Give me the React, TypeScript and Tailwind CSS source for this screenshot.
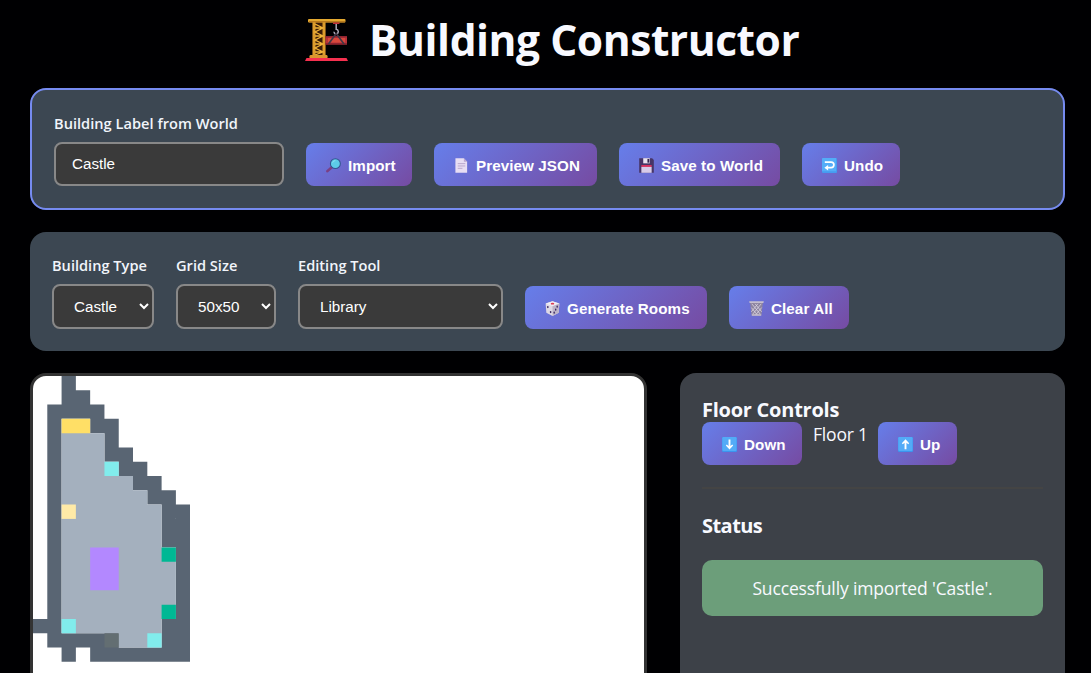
import type { ReactNode } from "react";

const MAP = [
  "..W........",
  "..WW.......",
  ".WWWW......",
  ".WYYWW.....",
  ".WFFFW.....",
  ".WFFFWW....",
  ".WFFFCWW...",
  ".WFFFFFWW..",
  ".WFFFFFFWW.",
  ".WLFFFFFFWW",
  ".WFFFFFFFWW",
  ".WFFFFFFFWW",
  ".WFFPPFFFGW",
  ".WFFPPFFFFW",
  ".WFFPPFFFFW",
  ".WFFFFFFFFW",
  ".WFFFFFFFGW",
  "WWCFFFFFFWW",
  ".WWWWDFFCWW",
  "..W.WWWWWWW",
];

// Base layers also cover the tiles drawn over them, so no gaps show between.
const LAYERS = [
  { kinds: "WD", color: "#596573" },
  { kinds: "FYLCGP", color: "#a4b0be" },
  { kinds: "Y", color: "#ffdf66" },
  { kinds: "L", color: "#ffeaa7" },
  { kinds: "C", color: "#81ecec" },
  { kinds: "G", color: "#00b894" },
  { kinds: "P", color: "#b388ff" },
  { kinds: "D", color: "#636e72" },
];

const CELL = 14.29;

function tilePath(kinds: string) {
  const parts: string[] = [];
  MAP.forEach((row, y) =>
    [...row].forEach((c, x) => {
      if (kinds.includes(c)) parts.push(`M${x} ${y}h1v1h-1z`);
    })
  );
  return parts.join("");
}

function Crane() {
  return (
    <svg className="h-[44px] w-[44px] shrink-0" viewBox="0 0 44 44">
      <path d="M7.500 3H20.500V39H7.500z" fill="#3a1c08" />
      <path d="M7.500 3h3v36h-3zM17.500 3h3v36h-3z" fill="#dc9c2c" />
      <path d="M10 6l8 4-8 4 8 4-8 4 8 4-8 4 8 4-8 3M10 10h8M10 18h8M10 26h8M10 34h8" stroke="#f0b43a" strokeWidth="1.300" fill="none" />
      <rect x="3" y="1" width="37.500" height="3.400" rx="1" fill="#e3a830" />
      <rect x="4" y="3" width="36" height="1.400" fill="#b87a1e" />
      <rect x="4.500" y="37" width="18" height="3.500" rx="1.200" fill="#d9962f" />
      <path d="M1.500 40h40l1.500 3H0z" fill="#f5304f" />
      <rect x="28" y="4.400" width="6.500" height="1.600" rx=".5" fill="#c22d36" />
      <path d="M31.200 6v6M31.200 11c2.500 1 3 4 .3 4.800-1.600.3-2.600-.8-2.300-2" stroke="#aaa6b5" strokeWidth="1.500" fill="none" />
      <path d="M20.500 18h21.500v8.500H20.500z" fill="#b8323a" />
      <path d="M20.500 18h21.500v1.500H20.500zM20.500 25h21.500v1.500H20.500z" fill="#8e2430" />
      <path d="M23 20h17v4.500H23z" fill="#d8483c" />
      <path d="M31.200 15.500L23.500 26M31.200 15.500L39 26" stroke="#413846" strokeWidth="1.700" fill="none" />
    </svg>
  );
}

function Glyph({ children }: { children: ReactNode }) {
  return (
    <svg className="mt-[2px] h-[15px] w-[15px] shrink-0" viewBox="0 0 16 16">
      {children}
    </svg>
  );
}

const Magnifier = () => (
  <Glyph>
    <path d="M6.500 9.500L1.500 14" stroke="#7b3f83" strokeWidth="2.800" strokeLinecap="round" />
    <circle cx="10" cy="6" r="5.300" fill="#5dcbe8" stroke="#35518f" strokeWidth="1.100" />
    <path d="M7 5a3.300 3.300 0 0 1 3-2.300" stroke="#8de4f2" fill="none" />
  </Glyph>
);

const Page = () => (
  <Glyph>
    <path d="M1.500 .2h9L14 4v11.800H1.500z" fill="#e8def3" />
    <path d="M10.500.2L14 4h-3.500z" fill="#b9a6cf" />
    <path d="M4 6h8M4 8.500h8M4 11h5" stroke="#b7a5cb" strokeWidth="1" />
  </Glyph>
);

const Floppy = () => (
  <Glyph>
    <path d="M.2.2H14L15.800 2v13.800H.2z" fill="#473568" />
    <path d="M4.500.2h7v5.500h-7z" fill="#e9e3f1" />
    <path d="M9 1h2v4H9z" fill="#30234c" />
    <path d="M2.500 7.500h11v2h-11z" fill="#e0315f" />
    <path d="M2.500 9.500h11v6.300h-11z" fill="#d8cbe9" />
  </Glyph>
);

const Return = () => (
  <Glyph>
    <rect width="16" height="16" rx="1.200" fill="#459cf0" />
    <path d="M0 1.200A1.200 1.200 0 0 1 1.200 0H15v14H0z" fill="#54adf8" />
    <path d="M3 4.300h6.700a3 3 0 0 1 0 6H5.500" stroke="#fff" strokeWidth="1.800" fill="none" />
    <path d="M6.500 7.400v5.800L2.500 10.300z" fill="#fff" />
  </Glyph>
);

const Die = () => (
  <Glyph>
    <path d="M8 .2l7.300 2.500-.7 9.800L8 15.900 1.400 12.500.7 2.700z" fill="#ded9e5" />
    <path d="M8 .2l7.300 2.500-7.300 3-7.300-3z" fill="#f0edf3" />
    <path d="M8 5.700l7.300-3-.7 9.800L8 15.900z" fill="#bdb4c8" />
    <ellipse cx="8" cy="2.800" rx="1.900" ry=".9" fill="#dc3a51" />
    <g fill="#3d2b63">
      <ellipse cx="3" cy="6.500" rx=".9" ry="1.200" />
      <ellipse cx="13" cy="6" rx=".8" ry="1.200" />
      <ellipse cx="11.400" cy="9.300" rx=".8" ry="1.200" />
      <ellipse cx="9.800" cy="12.500" rx=".8" ry="1.200" />
      <ellipse cx="6" cy="11.800" rx=".9" ry="1.200" />
    </g>
  </Glyph>
);

const Bin = () => (
  <Glyph>
    <path d="M1.200 2h13.600L13.200 15.500H2.800z" fill="#8d849f" />
    <path d="M3 3l9 11M6.500 3l7 8.500M2.500 7l6.500 8M13 3L4 14M9.500 3l-7 8.500M13.500 7L7 15" stroke="#ddd8e5" strokeWidth=".8" />
    <path d="M.2.200h15.600l-.4 2H.6zM3 14h10v1.800H3z" fill="#c5becd" />
  </Glyph>
);

const ArrowTile = ({ up }: { up?: boolean }) => (
  <Glyph>
    <rect width="16" height="16" rx="1.200" fill="#3b94ee" />
    <rect x=".3" width="15.200" height="15" rx="1.200" fill="#53abf7" />
    <path
      d={
        up
          ? "M8 2.400l3.900 4.200-1 1-1.900-1.600v7H7V6L5.100 7.600l-1-1z"
          : "M8 13.200l3.900-4.200-1-1L9 9.600v-7H7v7L5.100 8l-1 1z"
      }
      fill="#fff"
    />
  </Glyph>
);

function Button({ icon, label, className }: { icon: ReactNode; label: string; className: string }) {
  return (
    <button
      className={`flex h-[43px] shrink-0 items-center gap-[7px] rounded-lg bg-[linear-gradient(135deg,#667eea_0%,#764ba2_100%)] pl-[20px] font-['Liberation_Sans',sans-serif] text-[15.200px] font-bold tracking-[0.080px] whitespace-nowrap text-white ${className}`}
    >
      {icon}
      <span className="pt-[3px]">{label}</span>
    </button>
  );
}

function Label({ children, className }: { children: ReactNode; className: string }) {
  return (
    <span className={`block h-[20px] whitespace-nowrap text-[14.600px] leading-[18px] font-semibold text-[#f1f5fb] ${className}`}>
      {children}
    </span>
  );
}

function Select({ value, className }: { value: string; className: string }) {
  return (
    <select
      defaultValue={value}
      className={`block h-[45px] rounded-lg border-2 border-[#888] bg-[#3a3a3a] pl-4 font-['Liberation_Sans',sans-serif] text-[15.200px] text-white ${className}`}
    >
      <option>{value}</option>
    </select>
  );
}

export default function App() {
  return (
    <div className="h-[673px] overflow-hidden bg-[#000002] pl-[30px] pr-[26px] font-['Open_Sans','Noto_Sans',sans-serif] text-[#f8f9ff]">
      <header className="flex h-[88px] items-start pt-[18px] pl-[275px]">
        <Crane />
        <h1 className="ml-[20px] -mt-[8px] text-[42.500px] leading-[60px] font-bold tracking-[-0.450px] whitespace-nowrap">Building Constructor</h1>
      </header>

      <section className="flex h-[122px] rounded-2xl border-2 border-[#768bf0] bg-[#3c4752] px-[22px] pt-[24px]">
        <div className="w-[230px]">
          <Label className="tracking-[0.020px]">Building Label from World</Label>
          <input
            defaultValue="Castle"
            className="mt-[8px] block h-[44px] w-[230px] rounded-lg border-2 border-[#888] bg-[#3a3a3a] px-4 pb-[2px] font-['Liberation_Sans',sans-serif] text-[15.200px] text-white"
          />
        </div>
        <div className="mt-[29px] ml-[22px] flex gap-[22px]">
          <Button icon={<Magnifier />} label="Import" className="w-[106px]" />
          <Button icon={<Page />} label="Preview JSON" className="w-[163px]" />
          <Button icon={<Floppy />} label="Save to World" className="w-[161px]" />
          <Button icon={<Return />} label="Undo" className="w-[98px]" />
        </div>
      </section>

      <section className="mt-[22px] flex h-[119px] gap-[22px] rounded-2xl bg-[#3c4752] px-[22px] pt-[24px]">
        <div className="w-[102px]">
          <Label className="mb-[8px]">Building Type</Label>
          <Select value="Castle" className="w-[102px]" />
        </div>
        <div className="w-[100px]">
          <Label className="mb-[8px]">Grid Size</Label>
          <Select value="50x50" className="w-[100px]" />
        </div>
        <div className="w-[205px]">
          <Label className="mb-[8px]">Editing Tool</Label>
          <Select value="Library" className="w-[205px]" />
        </div>
        <div className="mt-[30px] flex gap-[22px]">
          <Button icon={<Die />} label="Generate Rooms" className="w-[182px]" />
          <Button icon={<Bin />} label="Clear All" className="w-[120px]" />
        </div>
      </section>

      <main className="mt-[22px] flex gap-[33px]">
        <div className="h-[620px] w-[617px] shrink-0 overflow-hidden rounded-2xl border-[3px] border-[#333] bg-white">
          <svg width={CELL * 11} height={CELL * 20} viewBox="0 0 11 20" className="block">
            {LAYERS.map(({ kinds, color }) => (
              <path key={kinds} d={tilePath(kinds)} fill={color} />
            ))}
          </svg>
        </div>

        <aside className="h-[620px] w-[385px] shrink-0 rounded-2xl bg-[#3d4148] px-[22px] pt-[22px]">
          <h2 className="h-[27px] text-[20px] leading-[29px] font-bold tracking-[-0.250px] whitespace-nowrap">Floor Controls</h2>
          <div className="flex">
            <Button icon={<ArrowTile />} label="Down" className="w-[100px]" />
            <span className="w-[76px] pl-[11px] text-[17.500px] leading-[24px] tracking-[-0.200px] whitespace-nowrap">Floor 1</span>
            <Button icon={<ArrowTile up />} label="Up" className="w-[79px]" />
          </div>
          <div className="mt-[22px] h-[2px] bg-[#444]" />
          <h2 className="mt-[22px] h-[28px] text-[20px] leading-[30px] font-bold tracking-[-0.550px]">Status</h2>
          <div className="mt-[21px] flex h-[56px] items-center justify-center rounded-[10px] bg-[#6c9e7a] pt-px text-[17.500px] font-medium tracking-[-0.140px] whitespace-nowrap">
            Successfully imported 'Castle'.
          </div>
        </aside>
      </main>
    </div>
  );
}
